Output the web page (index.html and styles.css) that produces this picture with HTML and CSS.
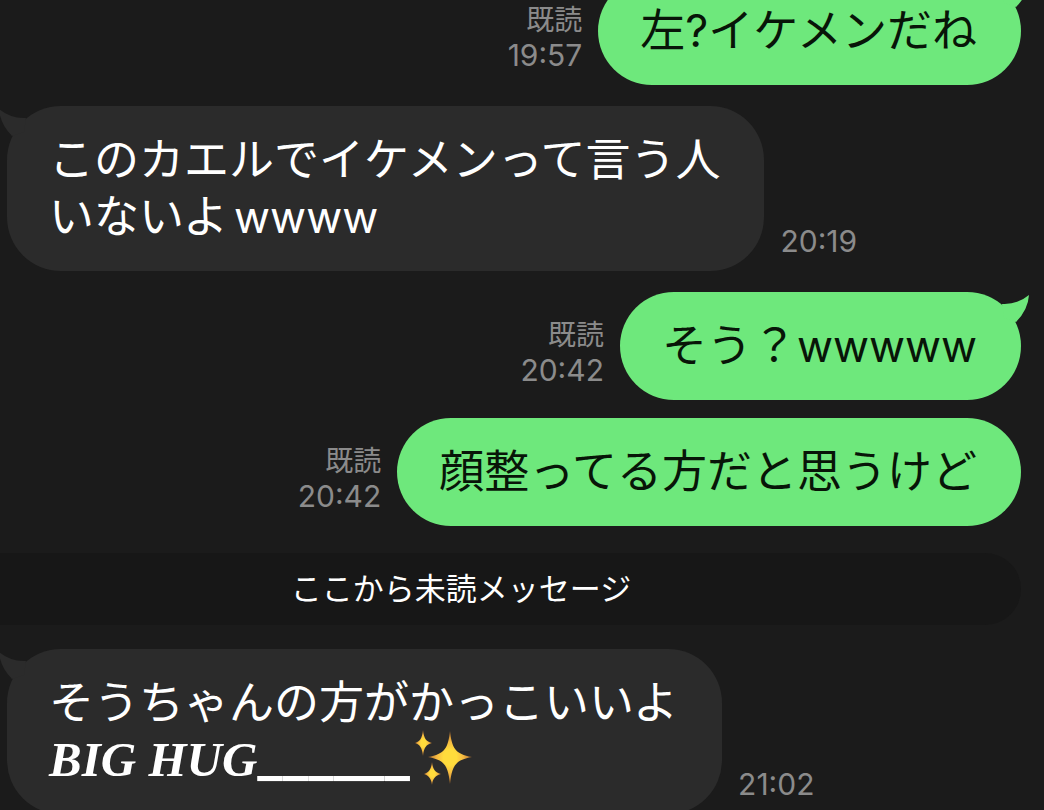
FILE: index.html
```html
<!DOCTYPE html>
<html lang="ja">
<head>
    <meta charset="UTF-8">
    <meta name="viewport" content="width=device-width, initial-scale=1.0">
    <title>トーク</title>
    <link rel="stylesheet" href="styles.css">
</head>
<body>
    <main class="chat">
        <div class="message sent">
            <div class="meta"><span class="read">既読</span><time>19:57</time></div>
            <div class="bubble">
                <svg class="tail" viewBox="0 0 30 30" aria-hidden="true"><path d="M2 10Q17 11 29 1Q28 16 16 28L4 24Z"/></svg>
                左?イケメンだね
            </div>
        </div>

        <div class="message received">
            <div class="bubble">
                <svg class="tail" viewBox="0 0 30 30" aria-hidden="true"><path d="M28 10Q13 11 1 1Q2 16 14 28L26 24Z"/></svg>
                このカエルでイケメンって言う人<br>いないよ<span class="latin">wwww</span>
            </div>
            <div class="meta"><time>20:19</time></div>
        </div>

        <div class="message sent">
            <div class="meta"><span class="read">既読</span><time>20:42</time></div>
            <div class="bubble">
                <svg class="tail" viewBox="0 0 30 30" aria-hidden="true"><path d="M2 10Q17 11 29 1Q28 16 16 28L4 24Z"/></svg>
                そう？<span class="laugh">wwwww</span>
            </div>
        </div>

        <div class="message sent follow">
            <div class="meta"><span class="read">既読</span><time>20:42</time></div>
            <div class="bubble">顔整ってる方だと思うけど</div>
        </div>

        <div class="unread">ここから未読メッセージ</div>

        <div class="message received">
            <div class="bubble">
                <svg class="tail" viewBox="0 0 30 30" aria-hidden="true"><path d="M28 10Q13 11 1 1Q2 16 14 28L26 24Z"/></svg>
                そうちゃんの方がかっこいいよ<br><span class="hug">BIG HUG</span><span class="line">______</span><svg class="sparkles" viewBox="0 0 58 56" role="img" aria-label="✨">
                    <defs>
                        <radialGradient id="gold">
                            <stop offset="0.3" stop-color="#ffdc3c"/>
                            <stop offset="0.6" stop-color="#f5b942"/>
                            <stop offset="1" stop-color="#a8672c"/>
                        </radialGradient>
                    </defs>
                    <g fill="url(#gold)">
                        <path d="M35 1C37 18 40 24 57 27C40 30 37 36 35 54C33 36 30 30 13 27C30 24 33 18 35 1Z"/>
                        <path d="M8 0C9 9 11 11 17 13C11 15 9 17 8 26C7 17 5 15 0 13C5 11 7 9 8 0Z"/>
                        <path d="M17 32C18 40 20 42 26 44C20 46 18 48 17 55C16 48 14 46 9 44C14 42 16 40 17 32Z"/>
                    </g>
                </svg>
            </div>
            <div class="meta"><time>21:02</time></div>
        </div>
    </main>
</body>
</html>
```
FILE: styles.css
```css
body {
    margin: 0;
    height: 100vh;
    overflow: hidden;
    background-color: #1b1b1b;
    color: #fff;
    font-family: Inter, "Noto Sans CJK JP", sans-serif;
}

/* the thread is scrolled, so the first bubble is cut by the top edge */
.chat {
    display: flex;
    flex-direction: column;
    margin-top: -23px;
    padding: 0 23px 0 7px;
}

.message {
    display: flex;
    align-items: flex-end;
    gap: 16px;
    margin-bottom: 21px;
}

.sent {
    justify-content: flex-end;
}

.follow {
    margin-top: -3px;
}

.bubble {
    position: relative;
    padding: 25px 44px 26px 42px;
    border-radius: 54px;
    font-size: 45px;
    line-height: 57px;
    white-space: nowrap;
}

.sent .bubble {
    background-color: #6ee87c;
    color: #081508;
}

.received .bubble {
    background-color: #2b2b2b;
}

.tail {
    position: absolute;
    top: 2px;
    width: 30px;
    height: 30px;
}

.sent .tail {
    right: -9px;
    fill: #6ee87c;
}

.received .tail {
    left: -9px;
    fill: #2b2b2b;
}

.latin,
.laugh {
    font-size: 44px;
    line-height: 1;
}

.latin {
    margin-left: 6px;
}

.meta {
    display: flex;
    flex-direction: column;
    margin-bottom: 12px;
    color: #8b8b8b;
    font-size: 30px;
    line-height: 35px;
    text-align: right;
}

.read {
    font-size: 28px;
}

.unread {
    margin: 6px 0 24px -106px;
    padding: 16px 0;
    border-radius: 36px;
    background-color: #171717;
    font-size: 31px;
    line-height: 40px;
    text-align: center;
}

.hug {
    font-family: "Liberation Serif", serif;
    font-size: 49px;
    font-style: italic;
    font-weight: bold;
    line-height: 1;
}

.line {
    font-size: 55px;
    font-weight: 500;
    line-height: 0;
}

.sparkles {
    width: 58px;
    height: 56px;
    margin: -10px 0 0 5px;
    vertical-align: -10px;
}
```
